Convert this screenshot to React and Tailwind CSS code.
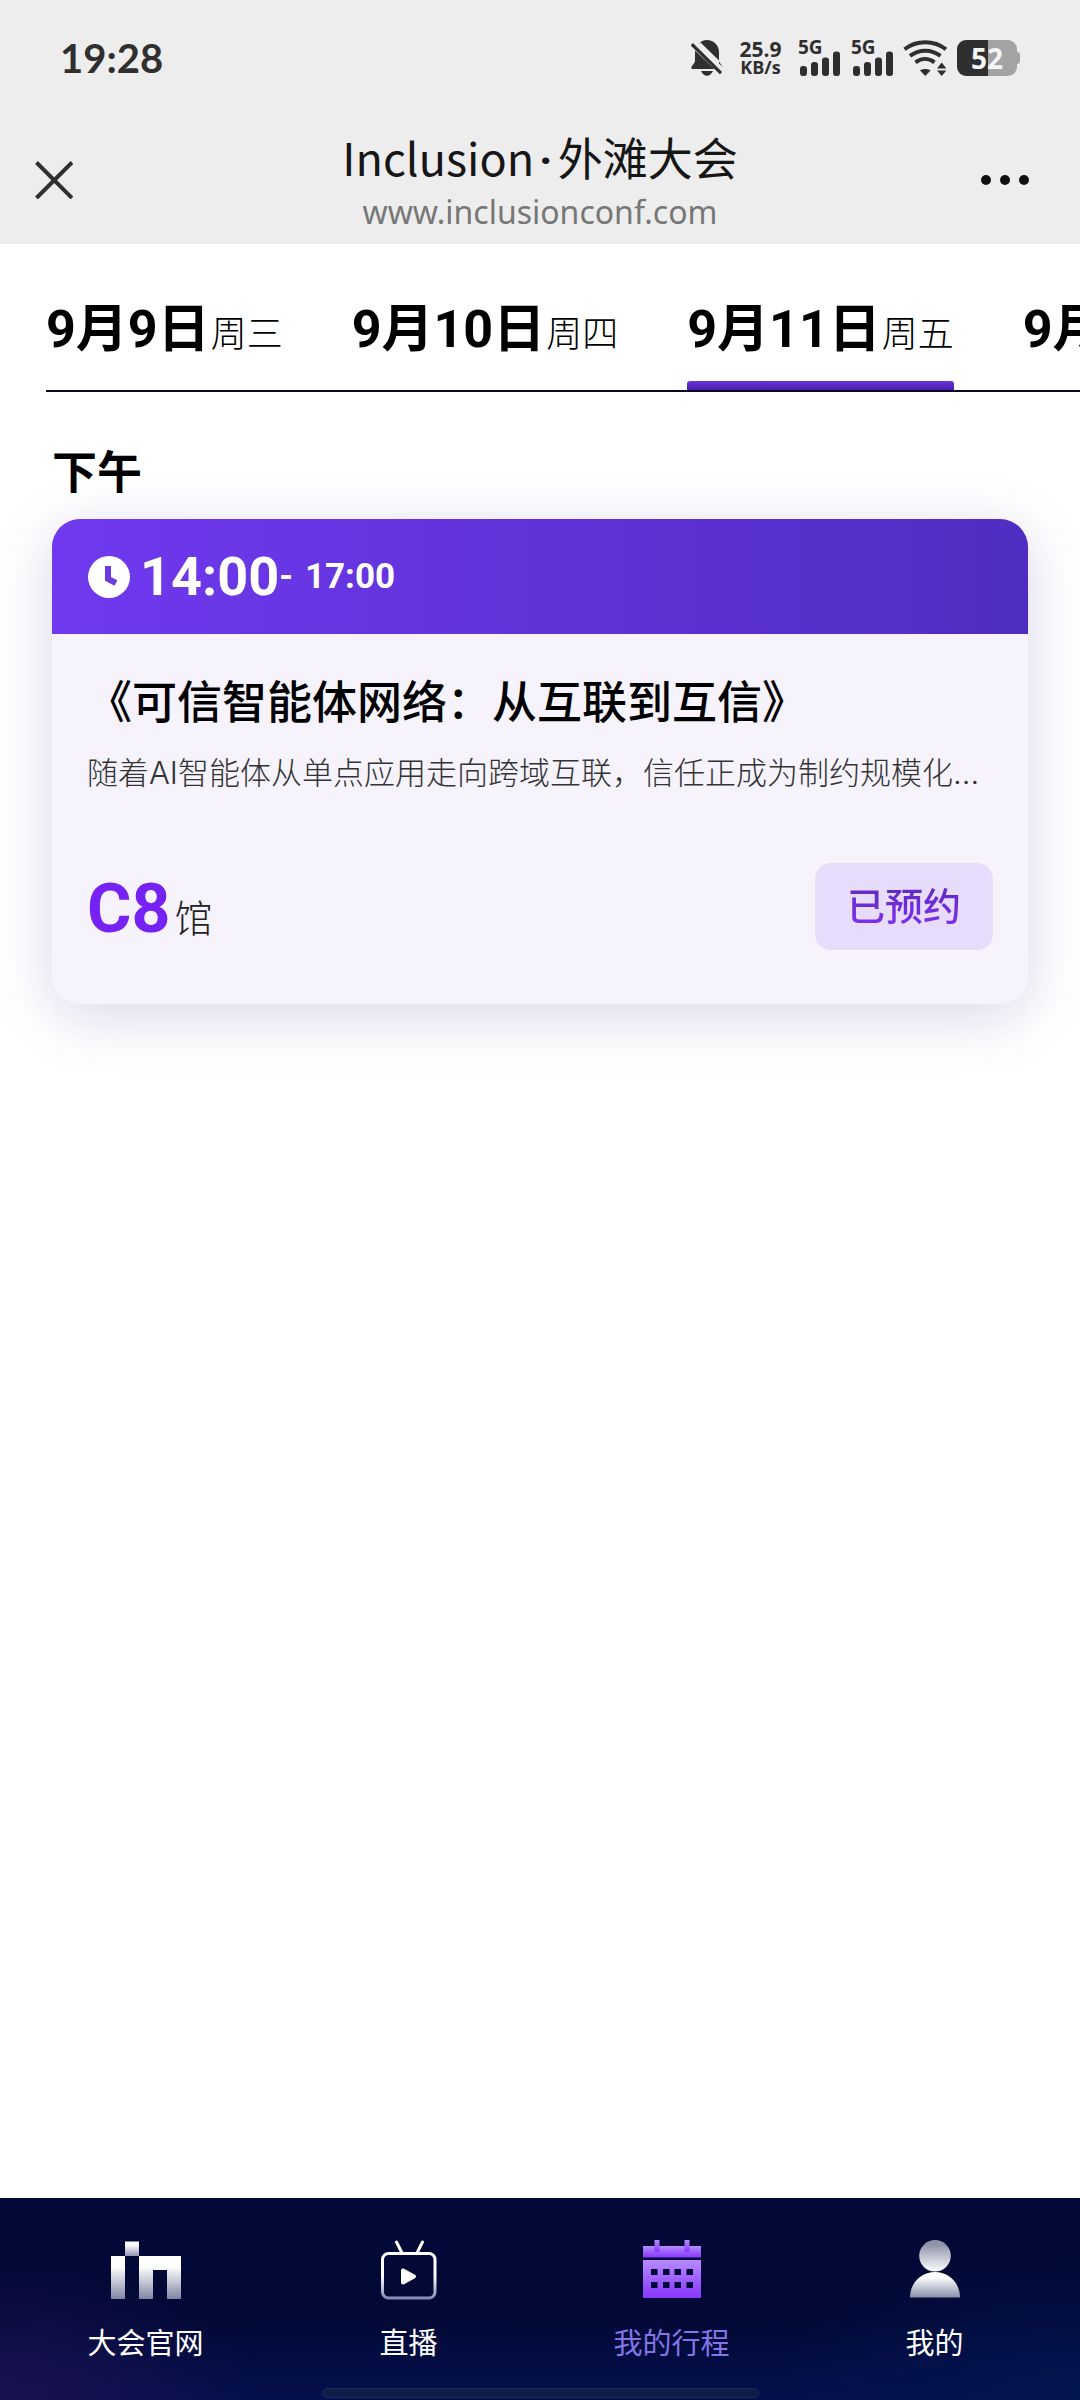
import { useState } from 'react';

const dates = [
  { id: '09', date: '9月9日', day: '周三' },
  { id: '10', date: '9月10日', day: '周四' },
  { id: '11', date: '9月11日', day: '周五' },
  { id: '12', date: '9月12日', day: '周六' },
];

function BellOff() {
  return (
    <svg width="32" height="36" viewBox="0 0 32 36" fill="#2f2f2f" aria-hidden="true">
      <path d="M7 4.5C9 1.8 12.500 0 16 0c6.600 0 12 5.200 12 12v8.500L9.500 2.600z" />
      <path d="M4 10.500 23.500 29H1.500C0 29 0 27.200 1 26l2.500-3.600c.4-.7.5-1.200.5-2z" />
      <path d="M28 21.500 31.800 27.200 28 23.500zM10 31h12c-1.500 3-3.600 4.700-6 4.700S11.500 34 10 31z" />
      <path d="M.8 4.200 30 33.200" stroke="#2f2f2f" strokeWidth="3.200" />
    </svg>
  );
}

function Signal() {
  return (
    <div className="relative h-9 w-[43px]">
      <span className="absolute left-0 top-0 text-[19px] font-bold leading-[14px]">5G</span>
      <svg className="block" width="43" height="36" viewBox="0 0 43 36" fill="#2f2f2f" aria-hidden="true">
        <rect x="2" y="26" width="7" height="10" rx="3" />
        <rect x="13" y="22" width="7" height="14" rx="3" />
        <rect x="24" y="17.500" width="7" height="18.500" rx="3" />
        <rect x="35" y="11.500" width="7" height="24.500" rx="3" />
      </svg>
    </div>
  );
}

function Wifi() {
  return (
    <svg width="45" height="36" viewBox="0 0 45 36" fill="none" stroke="#2f2f2f" strokeWidth="4" aria-hidden="true">
      <path d="M1.500 9.200C13.500-.2 31-.2 43 9.200" />
      <path d="M7 15.800c9-6.900 21.500-6.900 30.500 0" />
      <path d="M12.500 22.300c5.800-4.500 13-4.500 19 0" />
      <path d="M17 30.500c2.500-2 8-2 10.500 0L22.300 36z" fill="#2f2f2f" stroke="none" />
      <path d="M34 28.500 38.700 22.500 43.400 28.500zM34 30.500 38.700 36 43.400 30.500z" fill="#2f2f2f" stroke="none" />
    </svg>
  );
}

function Battery() {
  return (
    <div className="flex items-center">
      <div className="flex h-9 w-[60px] items-center justify-center rounded-[9px] bg-linear-to-r from-[#2f2f2f] from-51% to-[#a3a3a3] to-51% text-[28px] font-bold leading-9 text-[#f4f4f4]">
        52
      </div>
      <div className="h-3 w-[3px] rounded-r-[3px] bg-[#a3a3a3]" />
    </div>
  );
}

function StatusBar() {
  return (
    <div className="flex h-[116px] items-center justify-between px-[60px] font-['Open_Sans',sans-serif] text-[#2f2f2f]">
      <span className="font-[Lato,sans-serif] text-[40px] font-bold">19:28</span>
      <div className="flex items-center">
        <BellOff />
        <div className="ml-[15px] flex w-[45px] flex-col text-center font-bold">
          <span className="text-[21px] leading-[18px]">25.9</span>
          <span className="text-[18px] leading-[18px]">KB/s</span>
        </div>
        <div className="ml-[15px] flex gap-[10px]">
          <Signal />
          <Signal />
        </div>
        <div className="ml-[9px]">
          <Wifi />
        </div>
        <div className="ml-[9px]">
          <Battery />
        </div>
      </div>
    </div>
  );
}

function TitleBar() {
  return (
    <div className="grid h-32 grid-cols-[1fr_auto_1fr] items-center px-[35px]">
      <button type="button" aria-label="关闭" className="justify-self-start">
        <svg width="38" height="38" viewBox="0 0 38 38" stroke="#2f2f2f" strokeWidth="4" aria-hidden="true">
          <path d="M1.500 1.500 37 37M37 1.500 1.500 37" />
        </svg>
      </button>
      <div className="pt-1 text-center">
        <h1 className="mb-[2px] font-['Noto_Sans_CJK_SC',sans-serif] text-[45px] leading-[54px] text-[#161616]">
          Inclusion<span className="mx-[5px] font-[Roboto,sans-serif] font-bold">·</span>外滩大会
        </h1>
        <p className="font-['Noto_Sans',sans-serif] text-[32px] leading-[44px] text-[#777]">www.inclusionconf.com</p>
      </div>
      <button type="button" aria-label="更多" className="mr-4 justify-self-end">
        <svg width="48" height="10" viewBox="0 0 48 10" fill="#111" aria-hidden="true">
          <circle cx="5" cy="5" r="5" />
          <circle cx="24" cy="5" r="5" />
          <circle cx="43" cy="5" r="5" />
        </svg>
      </button>
    </div>
  );
}

function DateTabs({ active, onChange }) {
  return (
    <div className="ml-[46px] flex gap-[69px] overflow-hidden border-b-2 border-[#0c0524] pt-12" role="tablist">
      {dates.map((d) => (
        <button
          key={d.id}
          type="button"
          role="tab"
          aria-selected={active === d.id}
          onClick={() => onChange(d.id)}
          className="shrink-0 whitespace-nowrap text-black"
        >
          <span className="flex h-[89px] items-baseline gap-px">
            <span className="text-[52px] font-bold leading-[76px]">{d.date}</span>
            <span className="text-[36px] font-light">{d.day}</span>
          </span>
          <span
            className={
              active === d.id
                ? 'block h-[9px] rounded-t-[3px] bg-linear-to-b from-[#6a35d8] to-[#4a1db0]'
                : 'block h-[9px]'
            }
          />
        </button>
      ))}
    </div>
  );
}

function SessionCard() {
  return (
    <article className="overflow-hidden rounded-[28px] bg-[#f6f3fd] shadow-[0_12px_60px_rgba(70,45,140,0.2)]">
      <div className="flex h-[115px] items-center bg-linear-to-r from-[#7039ef] to-[#502dc2] pl-9 font-bold text-white">
        <svg width="42" height="42" viewBox="0 0 42 42" aria-hidden="true">
          <circle cx="21" cy="21" r="21" fill="#fff" />
          <path d="M20 10v13l8 4" fill="none" stroke="#6c3ae0" strokeWidth="6" />
        </svg>
        <span className="ml-[10px] text-[54px] leading-[60px]">14:00</span>
        <span className="flex gap-3 text-[35px] leading-[60px]">
          <span>-</span>
          <span>17:00</span>
        </span>
      </div>
      <div className="px-[35px] pb-[54px] pt-[38px]">
        <h3 className="truncate text-[45px] font-medium leading-[64px] text-black">《可信智能体网络：从互联到互信》</h3>
        <p className="mt-[14px] truncate font-[Inter,'Noto_Sans_CJK_SC',sans-serif] text-[31px] font-light leading-[46px] text-[#333]">
          随着AI智能体从单点应用走向跨域互联，信任正成为制约规模化落地的关键
        </p>
        <div className="mt-[67px] flex items-center justify-between">
          <p className="flex items-baseline pt-2">
            <span className="text-[68px] font-bold leading-[72px] text-[#7722f5]">C8</span>
            <span className="ml-1 text-[38px] font-light text-[#222]">馆</span>
          </p>
          <button type="button" className="h-[87px] w-[178px] rounded-2xl bg-[#e7dcfc]">
            <span className="bg-linear-to-b from-[#5f2abf] to-[#7f2ff5] bg-clip-text text-[38px] font-medium leading-[54px] text-transparent">
              已预约
            </span>
          </button>
        </div>
      </div>
    </article>
  );
}

function SiteIcon() {
  return (
    <svg width="70" height="60" viewBox="0 0 70 60" aria-hidden="true">
      <defs>
        <linearGradient id="site" gradientUnits="userSpaceOnUse" x1="0" y1="16" x2="0" y2="59">
          <stop offset=".25" stopColor="#fff" />
          <stop offset="1" stopColor="#8085a3" />
        </linearGradient>
        <linearGradient id="siteDot" x1="0" y1="0" x2="0" y2="1">
          <stop offset=".2" stopColor="#fff" />
          <stop offset="1" stopColor="#9195b3" />
        </linearGradient>
      </defs>
      <path d="M0 16h14v43H0zM28 16h42v43H56V30H42v29H28z" fill="url(#site)" />
      <path d="M14 1.500h14V16H14z" fill="url(#siteDot)" />
    </svg>
  );
}

function LiveIcon() {
  return (
    <svg width="56" height="60" viewBox="0 0 56 60" fill="none" aria-hidden="true">
      <defs>
        <linearGradient id="live" gradientUnits="userSpaceOnUse" x1="0" y1="12" x2="0" y2="60">
          <stop offset=".5" stopColor="#fff" />
          <stop offset="1" stopColor="#7f83ad" />
        </linearGradient>
      </defs>
      <rect x="1.500" y="13.500" width="52.500" height="44.500" rx="6" stroke="url(#live)" strokeWidth="3" />
      <path d="m15.500 2 5.500 11M41.500 2 36 13" stroke="#fff" strokeWidth="3" strokeLinecap="round" />
      <path d="M22 30.500v12l11-6z" fill="#fff" stroke="#fff" strokeWidth="4" strokeLinejoin="round" />
    </svg>
  );
}

function ScheduleIcon() {
  return (
    <svg width="58" height="60" viewBox="0 0 58 60" aria-hidden="true">
      <defs>
        <linearGradient id="cal" x1="0" y1="0" x2="0" y2="1">
          <stop stopColor="#b78bff" />
          <stop offset="1" stopColor="#8636ff" />
        </linearGradient>
      </defs>
      <path d="M0 6h58v11.500H0z" fill="url(#cal)" />
      <path d="M11.500 0h5v12h-5zM41.500 0h5v12h-5z" fill="url(#cal)" />
      <path d="M0 20h58v38H0z" fill="url(#cal)" />
      <path
        d="M8 29h6.500v6H8zM20 29h6.500v6H20zM31.500 29H38v6h-6.500zM43.500 29H50v6h-6.500zM8 42h6.500v6H8zM20 42h6.500v6H20zM31.500 42H38v6h-6.500zM43.500 42H50v6h-6.500z"
        fill="#020838"
      />
    </svg>
  );
}

function ProfileIcon() {
  return (
    <svg width="50" height="60" viewBox="0 0 50 60" aria-hidden="true">
      <defs>
        <linearGradient id="head" x1="0" y1="0" x2="0" y2="1">
          <stop offset=".15" stopColor="#9093a8" />
          <stop offset="1" stopColor="#fff" />
        </linearGradient>
        <linearGradient id="body" x1="0" y1="0" x2="0" y2="1">
          <stop offset=".2" stopColor="#fff" />
          <stop offset="1" stopColor="#8a8fab" />
        </linearGradient>
      </defs>
      <circle cx="25" cy="15.800" r="15.800" fill="url(#head)" />
      <path d="M0 57.500C0 43 11 32 25 32s25 11 25 25.500z" fill="url(#body)" />
    </svg>
  );
}

const navItems = [
  { label: '大会官网', icon: SiteIcon },
  { label: '直播', icon: LiveIcon },
  { label: '我的行程', icon: ScheduleIcon, active: true },
  { label: '我的', icon: ProfileIcon },
];

function BottomNav() {
  return (
    <footer className="bg-[radial-gradient(ellipse_24%_70%_at_0%_100%,#1a1250_0%,transparent_100%),radial-gradient(ellipse_30%_70%_at_100%_100%,#03154f_0%,transparent_100%),linear-gradient(to_bottom,#020936_0%,#020936_60%,#04104d_100%)]">
      <nav className="grid grid-cols-4 px-[14px] pt-[42px]">
        {navItems.map(({ label, icon: Icon, active }) => (
          <a key={label} href="#" className="flex flex-col items-center">
            <Icon />
            <span className={active ? 'mt-6 text-[29px] leading-10 text-[#8574e8]' : 'mt-6 text-[29px] leading-10 text-white'}>
              {label}
            </span>
          </a>
        ))}
      </nav>
      <div className="mx-auto mb-[2px] mt-6 h-[10px] w-[437px] rounded-full border border-[#1d2a58] bg-[#111b47]" />
    </footer>
  );
}

export default function App() {
  const [active, setActive] = useState('11');

  return (
    <div className="flex min-h-screen flex-col bg-white font-[Roboto,'Noto_Sans_CJK_SC',sans-serif]">
      <header className="bg-[#ededed]">
        <StatusBar />
        <TitleBar />
      </header>
      <main className="flex-1">
        <DateTabs active={active} onChange={setActive} />
        <section className="px-[52px] pt-[50px]">
          <h2 className="mb-[13px] text-[45px] font-bold leading-[64px] text-black">下午</h2>
          <SessionCard />
        </section>
      </main>
      <BottomNav />
    </div>
  );
}
